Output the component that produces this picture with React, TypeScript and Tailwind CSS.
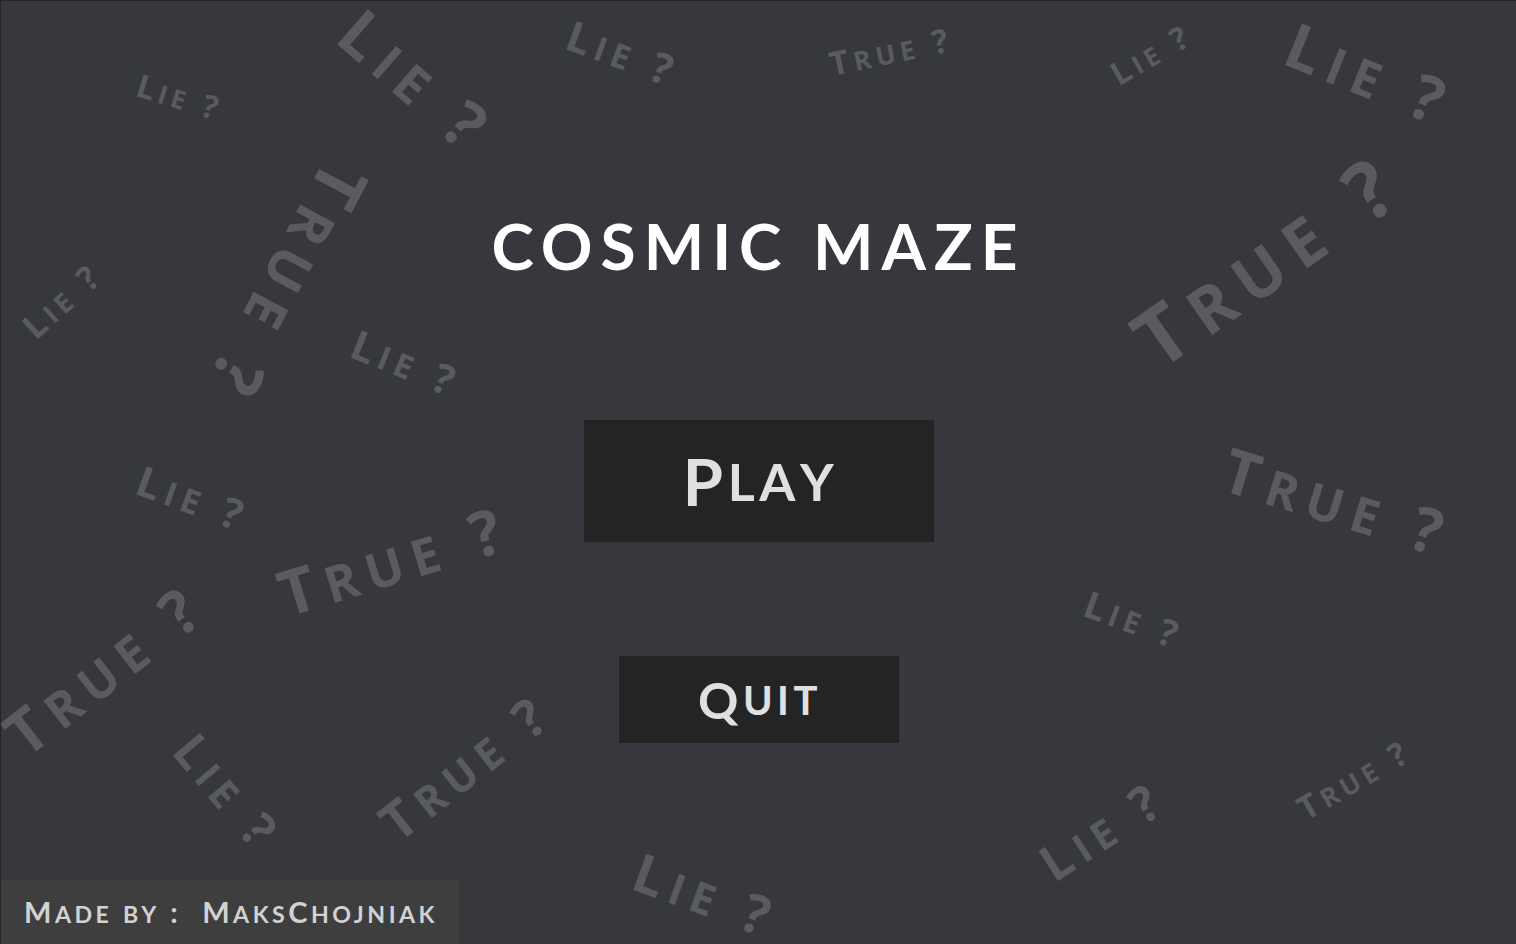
import React from "react";

type Drift = { w: "Lie" | "True"; x: number; y: number; r: number; s: number };

// Scattered "Lie ?" / "True ?" words floating behind the menu.
const WORDS: Drift[] = [
  { w: "Lie", x: 179, y: 96, r: 17, s: 32 },
  { w: "Lie", x: 416, y: 80, r: 41, s: 65 },
  { w: "Lie", x: 622, y: 52, r: 20, s: 42 },
  { w: "True", x: 890, y: 50, r: -12, s: 33 },
  { w: "Lie", x: 1150, y: 53, r: -30, s: 32 },
  { w: "Lie", x: 1369, y: 72, r: 22, s: 63 },
  { w: "True", x: 1266, y: 257, r: -35, s: 81 },
  { w: "True", x: 287, y: 283, r: 118, s: 69 },
  { w: "Lie", x: 61, y: 299, r: -42, s: 34 },
  { w: "Lie", x: 405, y: 362, r: 22, s: 41 },
  { w: "Lie", x: 192, y: 497, r: 20, s: 42 },
  { w: "True", x: 393, y: 558, r: -17, s: 63 },
  { w: "True", x: 103, y: 667, r: -38, s: 62 },
  { w: "Lie", x: 227, y: 791, r: 50, s: 49 },
  { w: "True", x: 464, y: 765, r: -38, s: 53 },
  { w: "Lie", x: 705, y: 893, r: 20, s: 54 },
  { w: "True", x: 1337, y: 500, r: 17, s: 62 },
  { w: "Lie", x: 1133, y: 618, r: 20, s: 37 },
  { w: "Lie", x: 1101, y: 829, r: -33, s: 50 },
  { w: "True", x: 1353, y: 778, r: -30, s: 33 },
];

const FONT = "font-['Lato','Open_Sans','DejaVu_Sans',sans-serif]";
const WORD_FONT = "font-['Open_Sans','Lato','DejaVu_Sans',sans-serif]";

// Small caps set by hand: capitals at full size, the rest at 80%.
function SmallCaps({ text }: { text: string }) {
  return (
    <>
      {text.split("").map((c, i) =>
        /[a-z]/.test(c) ? (
          <span key={i} className="text-[0.8em]">
            {c.toUpperCase()}
          </span>
        ) : (
          <span key={i}>{c}</span>
        )
      )}
    </>
  );
}

function Word({ d }: { d: Drift }) {
  return (
    <div
      className={`absolute whitespace-nowrap font-bold leading-none tracking-[0.15em] text-[#5a5b5f] ${WORD_FONT}`}
      style={{
        left: d.x,
        top: d.y,
        fontSize: d.s,
        transform: `translate(-50%, -50%) rotate(${d.r}deg)`,
      }}
    >
      <SmallCaps text={`${d.w} ?`} />
    </div>
  );
}

export default function App() {
  return (
    <div
      className={`relative flex h-[944px] w-full flex-col overflow-hidden border-l border-t border-[#25262a] bg-[#37383d] ${FONT}`}
    >
      <div className="pointer-events-none absolute inset-0">
        {WORDS.map((d, i) => (
          <Word key={i} d={d} />
        ))}
      </div>

      <main className="relative flex flex-col items-center pt-[213px]">
        <h1 className="text-[64px] font-bold leading-none tracking-[0.125em] text-white">COSMIC MAZE</h1>

        <button className="mt-[142px] flex h-[122px] w-[350px] items-center justify-center bg-[#242424] pl-[4px] text-[65px] font-bold leading-none tracking-[0.07em] text-[#e0e0e0]">
          <SmallCaps text="Play" />
        </button>

        <button className="mt-[114px] flex h-[87px] w-[280px] items-center justify-center bg-[#242424] pl-[3px] text-[50px] font-bold leading-none tracking-[0.09em] text-[#e0e0e0]">
          <SmallCaps text="Quit" />
        </button>
      </main>

      <footer className="relative mt-auto flex h-[64px] w-[458px] items-center bg-[#3e3e3e] pl-[23px] text-[29px] font-bold leading-none tracking-[0.12em] text-[#d2d2d2]">
        <span className="whitespace-pre">
          <SmallCaps text="Made by :" />
          {"  "}
          <SmallCaps text="MaksChojniak" />
        </span>
      </footer>
    </div>
  );
}
